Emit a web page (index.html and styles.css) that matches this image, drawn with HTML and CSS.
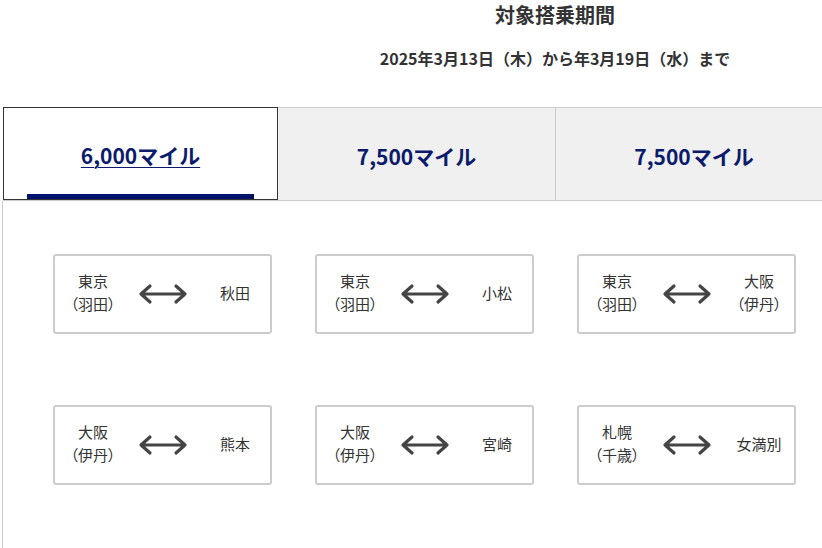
FILE: index.html
```html
<!DOCTYPE html>
<html lang="ja">
<head>
    <meta charset="UTF-8">
    <meta name="viewport" content="width=device-width, initial-scale=1.0">
    <title>対象搭乗期間</title>
    <link rel="stylesheet" href="styles.css">
</head>
<body>
    <div class="period">
        <h2>対象搭乗期間</h2>
        <p>2025年3月13日（木）から年3月19日（水）まで</p>
    </div>

    <div class="tabs">
        <a class="tab active" href="#">6,000マイル</a>
        <a class="tab" href="#">7,500マイル</a>
        <a class="tab" href="#">7,500マイル</a>
    </div>

    <div class="panel">
        <div class="route">
            <div class="city">東京<br>（羽田）</div>
            <svg class="arrow" viewBox="0 0 50 22"><path d="M3 11H47M12 3L3 11L12 19M38 3L47 11L38 19"/></svg>
            <div class="city">秋田</div>
        </div>
        <div class="route">
            <div class="city">東京<br>（羽田）</div>
            <svg class="arrow" viewBox="0 0 50 22"><path d="M3 11H47M12 3L3 11L12 19M38 3L47 11L38 19"/></svg>
            <div class="city">小松</div>
        </div>
        <div class="route">
            <div class="city">東京<br>（羽田）</div>
            <svg class="arrow" viewBox="0 0 50 22"><path d="M3 11H47M12 3L3 11L12 19M38 3L47 11L38 19"/></svg>
            <div class="city">大阪<br>（伊丹）</div>
        </div>
        <div class="route">
            <div class="city">大阪<br>（伊丹）</div>
            <svg class="arrow" viewBox="0 0 50 22"><path d="M3 11H47M12 3L3 11L12 19M38 3L47 11L38 19"/></svg>
            <div class="city">熊本</div>
        </div>
        <div class="route">
            <div class="city">大阪<br>（伊丹）</div>
            <svg class="arrow" viewBox="0 0 50 22"><path d="M3 11H47M12 3L3 11L12 19M38 3L47 11L38 19"/></svg>
            <div class="city">宮崎</div>
        </div>
        <div class="route">
            <div class="city">札幌<br>（千歳）</div>
            <svg class="arrow" viewBox="0 0 50 22"><path d="M3 11H47M12 3L3 11L12 19M38 3L47 11L38 19"/></svg>
            <div class="city">女満別</div>
        </div>
    </div>
</body>
</html>
```

FILE: styles.css
```css
body {
    font-family: "Noto Sans CJK JP", "Noto Sans", sans-serif;
    margin: 0;
    width: 832px;
    color: #333;
    background-color: #fff;
}

html {
    overflow: hidden;
}

.period {
    margin-left: 288px;
    width: 534px;
    height: 107px;
    text-align: center;
}

.period h2 {
    margin: 0;
    padding-top: 1px;
    font-size: 20px;
    line-height: 28px;
    font-weight: bold;
}

.period p {
    margin: 17px 0 0;
    font-size: 16px;
    line-height: 24px;
    font-weight: bold;
}

.tabs {
    display: flex;
    margin-left: 3px;
    border-top: 1px solid #ccc;
    border-bottom: 1px solid #ccc;
    height: 92px;
}

.tab {
    flex: 0 0 277px;
    display: flex;
    align-items: center;
    justify-content: center;
    padding-top: 3px;
    background-color: #f0f0f0;
    color: #0b1a6b;
    font-size: 21px;
    font-weight: bold;
    text-decoration: none;
    box-sizing: border-box;
}

.tab + .tab {
    border-left: 1px solid #ccc;
}

.tab.active {
    flex-basis: 275px;
    position: relative;
    background-color: #fff;
    border: 1px solid #333;
    margin-top: -1px;
    height: 93px;
    text-decoration: underline;
    text-underline-offset: 3px;
    text-decoration-thickness: 1px;
}

.tab.active::after {
    content: "";
    position: absolute;
    left: 23px;
    right: 23px;
    bottom: 0;
    height: 5px;
    background-color: #00136b;
}

.tab.active + .tab {
    border-left: none;
}

.panel {
    margin-left: 2px;
    border-left: 1px solid #ccc;
    padding: 53px 0 80px 50px;
    display: grid;
    grid-template-columns: repeat(3, 219px);
    column-gap: 43px;
    row-gap: 71px;
}

.route {
    height: 80px;
    padding-bottom: 4px;
    border: 2px solid #ccc;
    border-radius: 3px;
    box-sizing: border-box;
    display: grid;
    grid-template-columns: 76px 1fr 70px;
    align-items: center;
}

.city {
    text-align: center;
    font-size: 15px;
    line-height: 23px;
    color: #333;
    font-feature-settings: "palt";
}

.arrow {
    width: 50px;
    height: 22px;
    margin-right: 6px;
    margin-top: 4px;
    justify-self: center;
}

.arrow path {
    fill: none;
    stroke: #444;
    stroke-width: 3.2;
    stroke-linecap: round;
    stroke-linejoin: round;
}
```
